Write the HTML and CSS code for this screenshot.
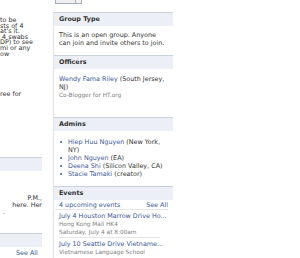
FILE: index.html
```html
<!DOCTYPE html>
<html>
<head>
<meta charset="utf-8">
<link rel="stylesheet" href="styles.css">
</head>
<body>
<div class="page">
  <div class="main">
    <div class="desc">
      <div class="ln">to be</div>
      <div class="ln">sts of 4</div>
      <div class="ln">at's it.</div>
      <div class="ln">&nbsp;4 swabs</div>
      <div class="ln">DP) to see</div>
      <div class="ln">mi or any</div>
      <div class="ln">ow</div>
    </div>
    <div class="more">ree for</div>
    <div class="lhead"></div>
    <div class="wall">
      <div class="ln ra">P.M.,</div>
      <div class="ln ra">here. Her</div>
      <div class="ln dot"><a class="link">.</a></div>
    </div>
    <div class="lhead lhead2"></div>
    <div class="lsee"><a class="link">See All</a></div>
  </div>
  <div class="side">
    <div class="sharerow">
      <div class="sharebtn"><span class="sb-main">Share</span><span class="sb-more">+</span></div>
    </div>
    <div class="sidebar">
      <div class="head">Group Type</div>
      <div class="body b-type">This is an open group. Anyone can join and invite others to join.</div>

      <div class="head">Officers</div>
      <div class="body b-off">
        <div><a class="link">Wendy Fama Riley</a> (South Jersey, NJ)</div>
        <div class="sub">Co-Blogger for HT.org</div>
      </div>

      <div class="head">Admins</div>
      <ul class="body b-adm">
        <li><a class="link">Hiep Huu Nguyen</a> (New York, NY)</li>
        <li><a class="link">John Nguyen</a> (EA)</li>
        <li><a class="link">Deena Shi</a> (Silicon Valley, CA)</li>
        <li><a class="link">Stacie Tamaki</a> (creator)</li>
      </ul>

      <div class="head">Events</div>
      <div class="evbar"><a class="link">4 upcoming events</a><a class="link">See All</a></div>
      <div class="events">
        <div class="event">
          <div class="evtitle"><a class="link">July 4 Houston Marrow Drive Ho...</a></div>
          <div class="sub">Hong Kong Mall HK4</div>
          <div class="sub">Saturday, July 4 at 8:00am</div>
        </div>
        <div class="event">
          <div class="evtitle"><a class="link">July 10 Seattle Drive Vietname...</a></div>
          <div class="sub">Vietnamese Language School</div>
        </div>
      </div>
    </div>
  </div>
</div>
</body>
</html>
```

FILE: styles.css
```css
* { box-sizing: border-box; }
html, body { margin: 0; padding: 0; background: #fff; }
body {
  font-family: "DejaVu Sans", "Lucida Grande", Verdana, sans-serif;
  font-size: 6.4px;
  line-height: 8px;
  color: #333;
  overflow: hidden;
  height: 258px;
}
.link { color: #3b5998; text-decoration: none; }
.page { display: flex; align-items: flex-start; gap: 11px; }

/* left main column (mostly off-screen) */
.main { flex: none; width: 200px; margin-left: -158px; display: flex; flex-direction: column; align-items: flex-end; }
.main > * { width: 42px; }
.ln { white-space: nowrap; }
.desc { padding-top: 18px; line-height: 5.6px; }
.more { padding-top: 33px; white-space: nowrap; }
.lhead { margin-top: 59px; height: 14px; background: #eceff5; border-top: 1px solid #c9d1de; }
.wall { padding-top: 24px; line-height: 7px; }
.wall .ra { text-align: right; }
.wall .dot { padding-left: 3px; }
.lhead2 { margin-top: 17px; }
.lsee { padding-top: 2px; padding-left: 16px; white-space: nowrap; }

/* right sidebar */
.side { flex: none; width: 120px; }
.sharerow { display: flex; height: 12px; }
.sharebtn { display: flex; margin-top: -8px; margin-left: 2px; height: 12px; }
.sb-main, .sb-more { border: 1px solid #a5acbd; background: #f0f0f0; font-size: 6px; line-height: 10px; color: #333; text-align: center; }
.sb-main { width: 21px; }
.sb-more { width: 6px; border-left: none; }
.sidebar { border-left: 1px solid #e2e2e2; min-height: 246px; }
.head { height: 14px; background: #eceff5; border-top: 1px solid #c9d1de; padding-left: 5px; font-weight: bold; line-height: 13px; color: #333; }
.body { margin: 0; padding: 5px 5px 8px 5px; }
.b-type { padding-top: 5px; }
.b-off { padding-top: 6px; padding-bottom: 18px; }
.sub { color: #808080; font-size: 5.8px; }
.b-adm { list-style: none; padding: 7px 5px 8px 14px; }
.b-adm li { position: relative; }
.b-adm li::before { content: ""; position: absolute; left: -8px; top: 3px; width: 2px; height: 2px; background: #6d84b4; }
.evbar { display: flex; justify-content: space-between; margin: 0 5px 0 1px; padding: 1px 0 0 4px; height: 10px; border-bottom: 1px solid #e5e5e5; }
.events { padding: 0 5px; }
.event { padding: 2px 0 1px 0; margin-right: 8px; white-space: nowrap; }
.event + .event { border-top: 1px solid #e5e5e5; padding-top: 2px; }
```
